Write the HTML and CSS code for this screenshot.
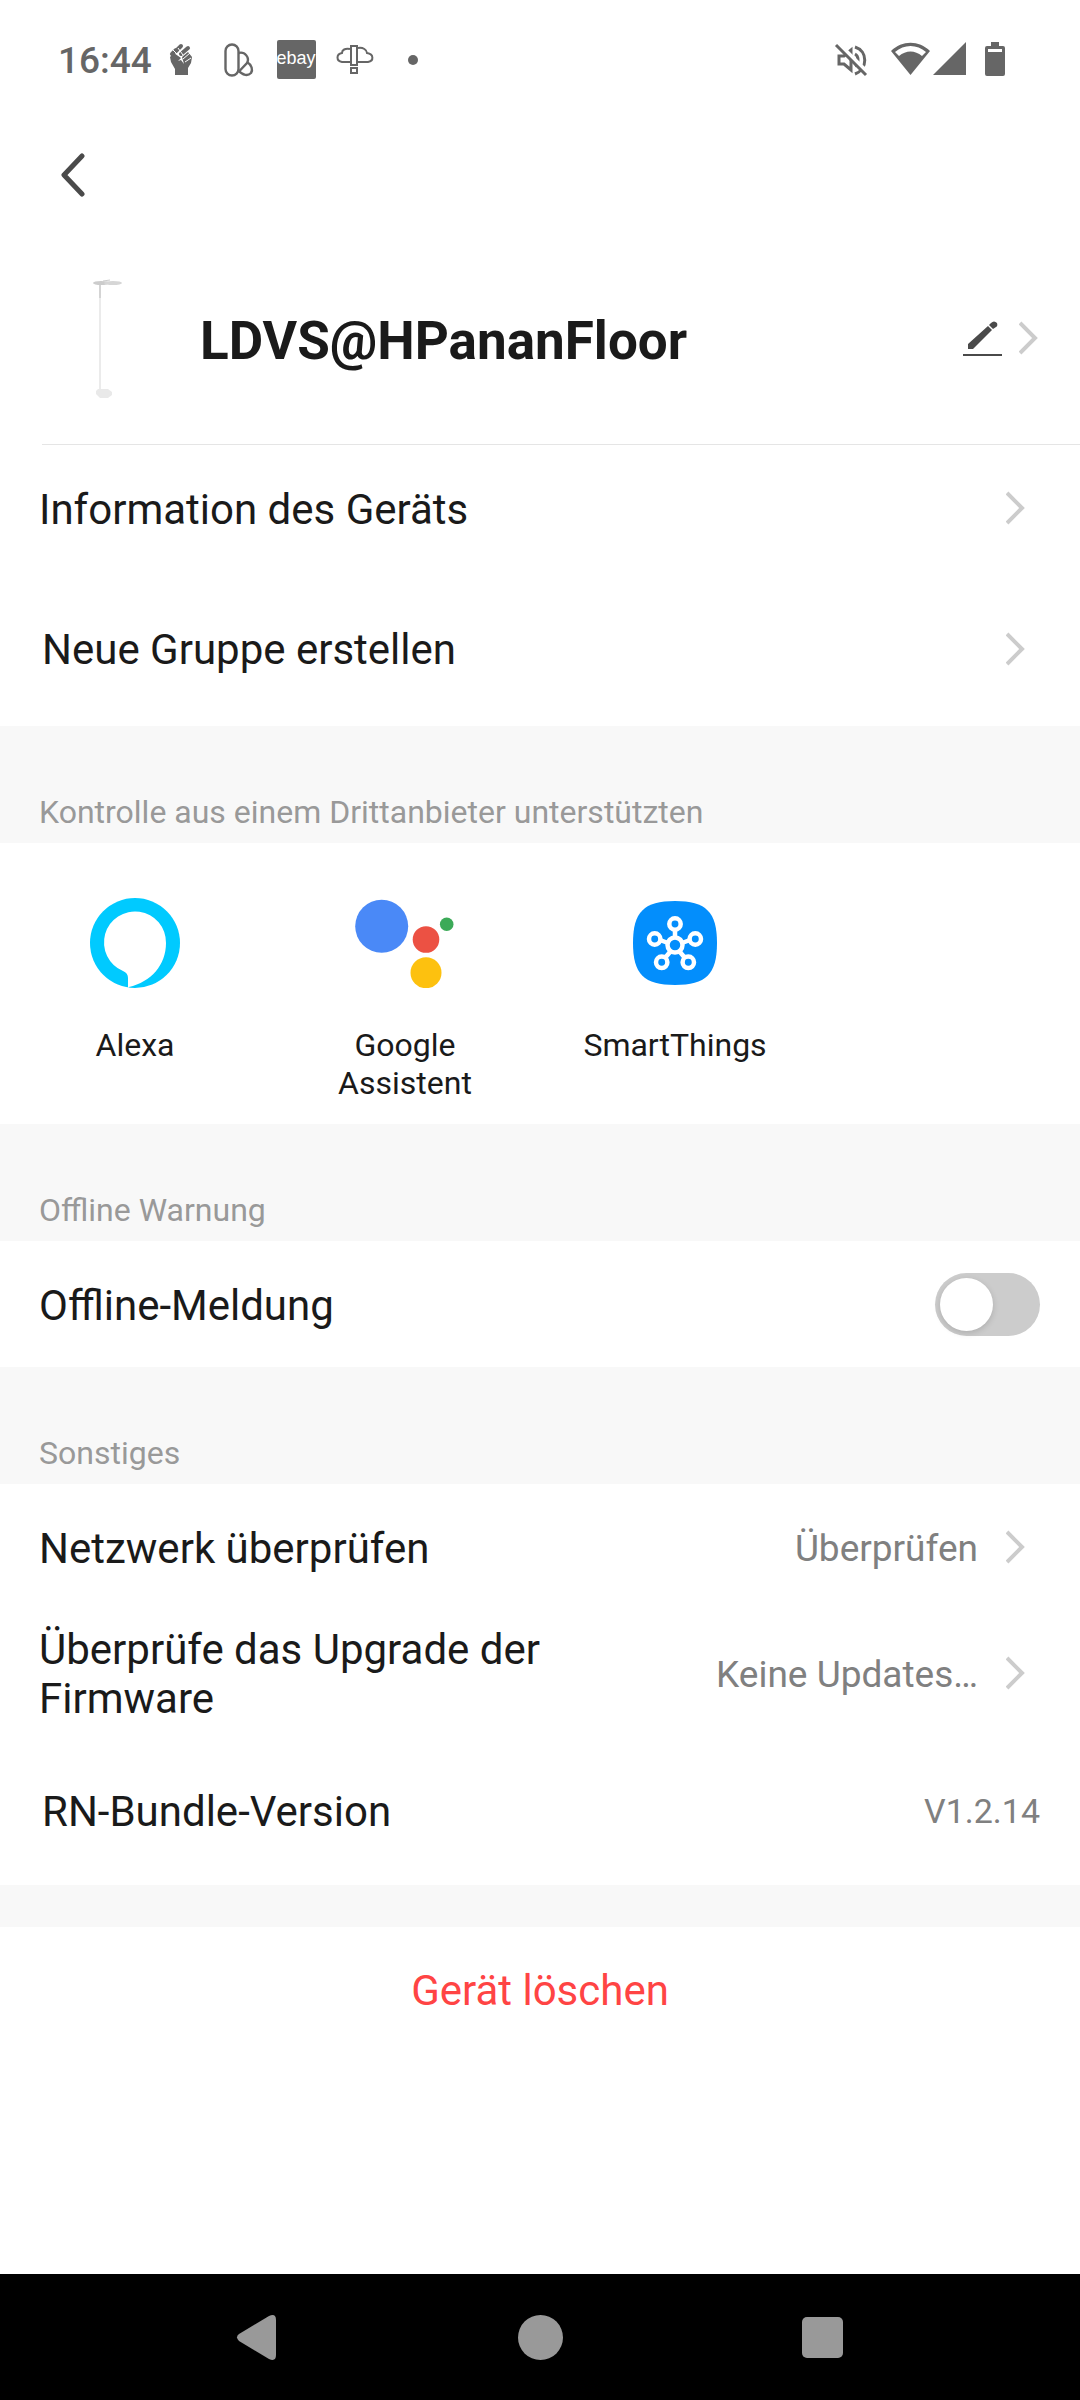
FILE: index.html
```html
<!DOCTYPE html>
<html lang="de">
<head>
  <meta charset="UTF-8" />
  <meta name="viewport" content="width=device-width, initial-scale=1.0" />
  <title>LDVS@HPananFloor</title>
  <link rel="stylesheet" href="styles.css">
</head>
<body>
  <div class="status-bar">
    <span class="time">16:44</span>
    <div class="notifications">
      <span class="slot">
        <svg width="40" height="40" viewBox="0 0 40 40" fill="#666">
          <path d="M14 35V29L10 22L9 17L13 13L20 18L17 21L20 20L23 24L21 17L27 12L31 17L30 23L27 28V35Z"/>
          <path d="M11 14L15 10M15 11L20 6M20 14L27 8" stroke="#666" stroke-width="4" stroke-linecap="round"/>
          <path d="M12 10L18 16M17 8L22 15M22 19L29 13M24 22L30 18" stroke="#fff" stroke-width="1"/>
        </svg>
      </span>
      <span class="slot">
        <svg width="40" height="40" viewBox="0 0 40 40" fill="none" stroke="#666" stroke-width="2.4">
          <rect x="6.500" y="4.500" width="13" height="31" rx="6.500"/>
          <path d="M19.500 13C26 11 31 18 28 23L19.500 32"/>
          <path d="M28 22C33 25 34 30 32 33C29 36 24 36 19 30"/>
        </svg>
      </span>
      <span class="slot">
        <svg width="40" height="40" viewBox="0 0 40 40">
          <rect width="39" height="39" rx="2" fill="#666"/>
          <text x="19" y="24" class="ebay">ebay</text>
        </svg>
      </span>
      <span class="slot">
        <svg width="40" height="40" viewBox="0 0 40 40" fill="none" stroke="#666" stroke-width="2">
          <path d="M15 22H7C1 21 1 14 7 13C7 10 10 8 15 9M23 8C28 7 32 10 32 13C39 14 39 21 33 22H23"/>
          <path d="M16 6H22V25H16ZM16 28H22V33H16Z"/>
        </svg>
      </span>
      <span class="slot">
        <svg width="10" height="10" viewBox="0 0 10 10" fill="#666"><circle cx="5" cy="5" r="5"/></svg>
      </span>
    </div>
    <div class="system-icons">
      <svg class="mute" width="40" height="40" viewBox="0 0 40 40" fill="none" stroke="#666" stroke-width="3">
        <path d="M8 16H13L20 10V30L13 24H8Z"/>
        <path d="M24 14C28 16 28 24 24 26M24 7C37 11 37 29 24 34"/>
        <path d="M7 3L37 33" stroke="#fff" stroke-width="4"/>
        <path d="M5 5L35 35"/>
      </svg>
      <svg width="40" height="40" viewBox="0 0 40 40" fill="#666">
        <path d="M0 11C11 0 28 0 39 11L19.500 35ZM4 12L8 16C15 10 24 10 31 16L35 12C26 4 13 4 4 12Z" fill-rule="evenodd"/>
      </svg>
      <svg width="40" height="40" viewBox="0 0 40 40" fill="#666"><path d="M35 2V35H2Z"/></svg>
      <svg class="battery" width="40" height="40" viewBox="0 0 40 40" fill="#666">
        <path d="M16 2H24V6H28Q30 6 30 8V34Q30 36 28 36H12Q10 36 10 34V8Q10 6 12 6H16ZM13 9V12H27V9Z" fill-rule="evenodd"/>
      </svg>
    </div>
  </div>

  <header class="toolbar">
    <button class="back" type="button" aria-label="Zurück">
      <svg width="28" height="46" viewBox="0 0 28 46" fill="none" stroke="#4a4a4a" stroke-width="5" stroke-linecap="round" stroke-linejoin="round">
        <path d="M24 3L6 22L24 41"/>
      </svg>
    </button>
  </header>

  <main>
    <a class="device" href="#">
      <svg class="lamp" width="130" height="120" viewBox="0 0 130 120">
        <path d="M58 6V112" stroke="#ebebeb" stroke-width="2"/>
        <path d="M58 6V20" stroke="#d4d4d4" stroke-width="2"/>
        <ellipse cx="59" cy="5" rx="8" ry="2" fill="#ccc"/>
        <ellipse cx="71" cy="5" rx="9" ry="2" fill="#d6d6d6"/>
        <path d="M61 3L68 2" stroke="#ccc"/>
        <path d="M56 111H66L70 114V117L66 120H58L54 116V113Z" fill="#e9e9e9"/>
      </svg>
      <h1>LDVS@HPananFloor</h1>
      <svg class="edit" width="40" height="40" viewBox="0 0 40 40" fill="#4a4a4a">
        <path d="M5 31V26L25 8L29 12L10 31ZM26 7L28 5Q31 2 34 5Q35 8 33 9L30 11Z"/>
        <rect x="0" y="36" width="39" height="2"/>
      </svg>
      <svg class="chevron" width="34" height="34" viewBox="0 0 34 34"><path d="M1 2L16 17L1 32"/></svg>
    </a>

    <a class="row" href="#">
      <span class="label">Information des Geräts</span>
      <svg class="chevron" width="34" height="34" viewBox="0 0 34 34"><path d="M1 2L16 17L1 32"/></svg>
    </a>
    <a class="row inset tall" href="#">
      <span class="label">Neue Gruppe erstellen</span>
      <svg class="chevron" width="34" height="34" viewBox="0 0 34 34"><path d="M1 2L16 17L1 32"/></svg>
    </a>

    <h2>Kontrolle aus einem Drittanbieter unterstützten</h2>
    <div class="services">
      <a href="#">
        <svg width="90" height="90" viewBox="0 0 90 90">
          <circle cx="45" cy="45" r="45" fill="#00caff"/>
          <path d="M38 90V80Q38 75 33 73A31 31 0 1 1 76 45C76 67 61 84 39 89Z" fill="#fff"/>
        </svg>
        <span>Alexa</span>
      </a>
      <a href="#">
        <svg width="100" height="90" viewBox="0 0 100 90">
          <circle cx="26.700" cy="28.300" r="26.500" fill="#4a89f7"/>
          <circle cx="71" cy="41.500" r="13.300" fill="#ec5143"/>
          <circle cx="71" cy="74.700" r="15.500" fill="#fdc10f"/>
          <circle cx="91.700" cy="26.200" r="6.800" fill="#3caa58"/>
        </svg>
        <span>Google<br>Assistent</span>
      </a>
      <a href="#">
        <svg width="90" height="90" viewBox="0 0 90 90">
          <path d="M45 3C76 3 87 14 87 45S76 87 45 87S3 76 3 45S14 3 45 3Z" fill="#038efc"/>
          <g fill="none" stroke="#fff" stroke-width="4.500">
            <path d="M45 32V38M30 42L38 45M60 42L52 45M35 60L40 54M55 60L50 54"/>
            <circle cx="45" cy="47" r="7.500"/>
            <circle cx="45" cy="26" r="5.700"/>
            <circle cx="24.700" cy="41" r="5.700"/>
            <circle cx="65.300" cy="41" r="5.700"/>
            <circle cx="31.700" cy="64.300" r="5.700"/>
            <circle cx="58.300" cy="64.300" r="5.700"/>
          </g>
        </svg>
        <span>SmartThings</span>
      </a>
    </div>

    <h2>Offline Warnung</h2>
    <div class="row">
      <label class="label" for="offline">Offline-Meldung</label>
      <input class="switch" type="checkbox" role="switch" id="offline">
    </div>

    <h2>Sonstiges</h2>
    <a class="row" href="#">
      <span class="label">Netzwerk überprüfen</span>
      <span class="value">Überprüfen</span>
      <svg class="chevron" width="34" height="34" viewBox="0 0 34 34"><path d="M1 2L16 17L1 32"/></svg>
    </a>
    <a class="row" href="#">
      <span class="label">Überprüfe das Upgrade der Firmware</span>
      <span class="value">Keine Updates…</span>
      <svg class="chevron" width="34" height="34" viewBox="0 0 34 34"><path d="M1 2L16 17L1 32"/></svg>
    </a>
    <div class="row inset bundle">
      <span class="label">RN-Bundle-Version</span>
      <span class="version">V1.2.14</span>
    </div>

    <div class="remove">
      <button type="button">Gerät löschen</button>
    </div>
  </main>

  <nav class="nav-bar">
    <button type="button" aria-label="Zurück">
      <svg width="45" height="45" viewBox="0 0 45 45" fill="#999"><path d="M34 1Q41 -2 41 5V40Q41 47 34 44L4 26Q0 22 4 19Z"/></svg>
    </button>
    <button type="button" aria-label="Startseite">
      <svg width="45" height="45" viewBox="0 0 45 45" fill="#999"><circle cx="22.500" cy="22.500" r="22.500"/></svg>
    </button>
    <button type="button" aria-label="Übersicht">
      <svg width="45" height="45" viewBox="0 0 45 45" fill="#999"><rect x="1" y="2" width="41" height="41" rx="5"/></svg>
    </button>
  </nav>
</body>
</html>
```
FILE: styles.css
```css
* {
  box-sizing: border-box;
}
body {
  margin: 0;
  min-height: 100vh;
  display: flex;
  flex-direction: column;
  font-family: Roboto, sans-serif;
  color: #1a1a1a;
  background: #fff;
}
a {
  color: inherit;
  text-decoration: none;
}
button {
  padding: 0;
  border: none;
  background: none;
  font-family: inherit;
}
svg {
  display: block;
  flex-shrink: 0;
}

/* status bar */
.status-bar {
  display: flex;
  align-items: center;
  height: 120px;
  padding: 0 65px 0 58px;
}
.time {
  width: 94px;
  font-size: 37px;
  font-weight: 500;
  color: #666;
}
.notifications,
.system-icons {
  display: flex;
  align-items: center;
}
.slot {
  display: flex;
  justify-content: center;
  width: 58px;
}
.ebay {
  font-family: "Liberation Sans", sans-serif;
  font-size: 18px;
  text-anchor: middle;
  fill: #fff;
}
.system-icons {
  margin-left: auto;
}
.mute {
  margin-right: 20px;
}
.battery {
  margin-left: 4px;
}

.toolbar {
  display: flex;
  align-items: center;
  height: 112px;
  padding: 0 58px;
}

/* device header */
.device {
  display: flex;
  align-items: center;
  height: 213px;
  margin-left: 42px;
  padding-right: 27px;
  border-bottom: 1px solid #e5e5e5;
}
.device h1 {
  flex: 1;
  margin: 0 0 0 28px;
  padding-top: 5px;
  font-size: 53px;
  font-weight: 700;
}
.edit {
  margin-right: 16px;
}
.chevron {
  fill: none;
  stroke: #ccc;
  stroke-width: 4;
}

/* list rows */
.row {
  display: flex;
  align-items: center;
  min-height: 126px;
  padding: 0 40px 0 39px;
}
.inset {
  padding-left: 42px;
}
.tall {
  min-height: 155px;
}
.bundle {
  min-height: 149px;
}
.label {
  flex: 1;
  padding-top: 2px;
  font-size: 42px;
  line-height: 49px;
}
.value {
  flex-shrink: 0;
  margin: 0 28px;
  padding-top: 2px;
  font-size: 37px;
  color: #808080;
}
.version {
  font-size: 34px;
  color: #808080;
}
h2 {
  margin: 0;
  padding: 67px 39px 12px;
  font-size: 32px;
  line-height: 38px;
  font-weight: 400;
  color: #999;
  background: #f8f8f8;
}

.services {
  display: grid;
  grid-template-columns: repeat(4, 1fr);
  padding: 55px 0 22px;
}
.services a {
  display: flex;
  flex-direction: column;
  align-items: center;
  gap: 38px;
  font-size: 32px;
  line-height: 38px;
  text-align: center;
}

.switch {
  appearance: none;
  width: 105px;
  height: 63px;
  margin: 0;
  padding: 5px;
  border-radius: 32px;
  background: #ccc;
}
.switch::before {
  content: "";
  display: block;
  width: 53px;
  height: 53px;
  border-radius: 50%;
  background: #fff;
  box-shadow: 0 2px 6px rgba(0, 0, 0, 0.15);
}
.switch:checked {
  background: #4cd964;
}
.switch:checked::before {
  margin-left: auto;
}

.remove {
  border-top: 42px solid #f8f8f8;
}
.remove button {
  width: 100%;
  height: 126px;
  font-size: 42px;
  color: #ff4444;
}

.nav-bar {
  display: flex;
  justify-content: center;
  align-items: center;
  gap: 238px;
  height: 126px;
  margin-top: auto;
  background: #000;
}
```
